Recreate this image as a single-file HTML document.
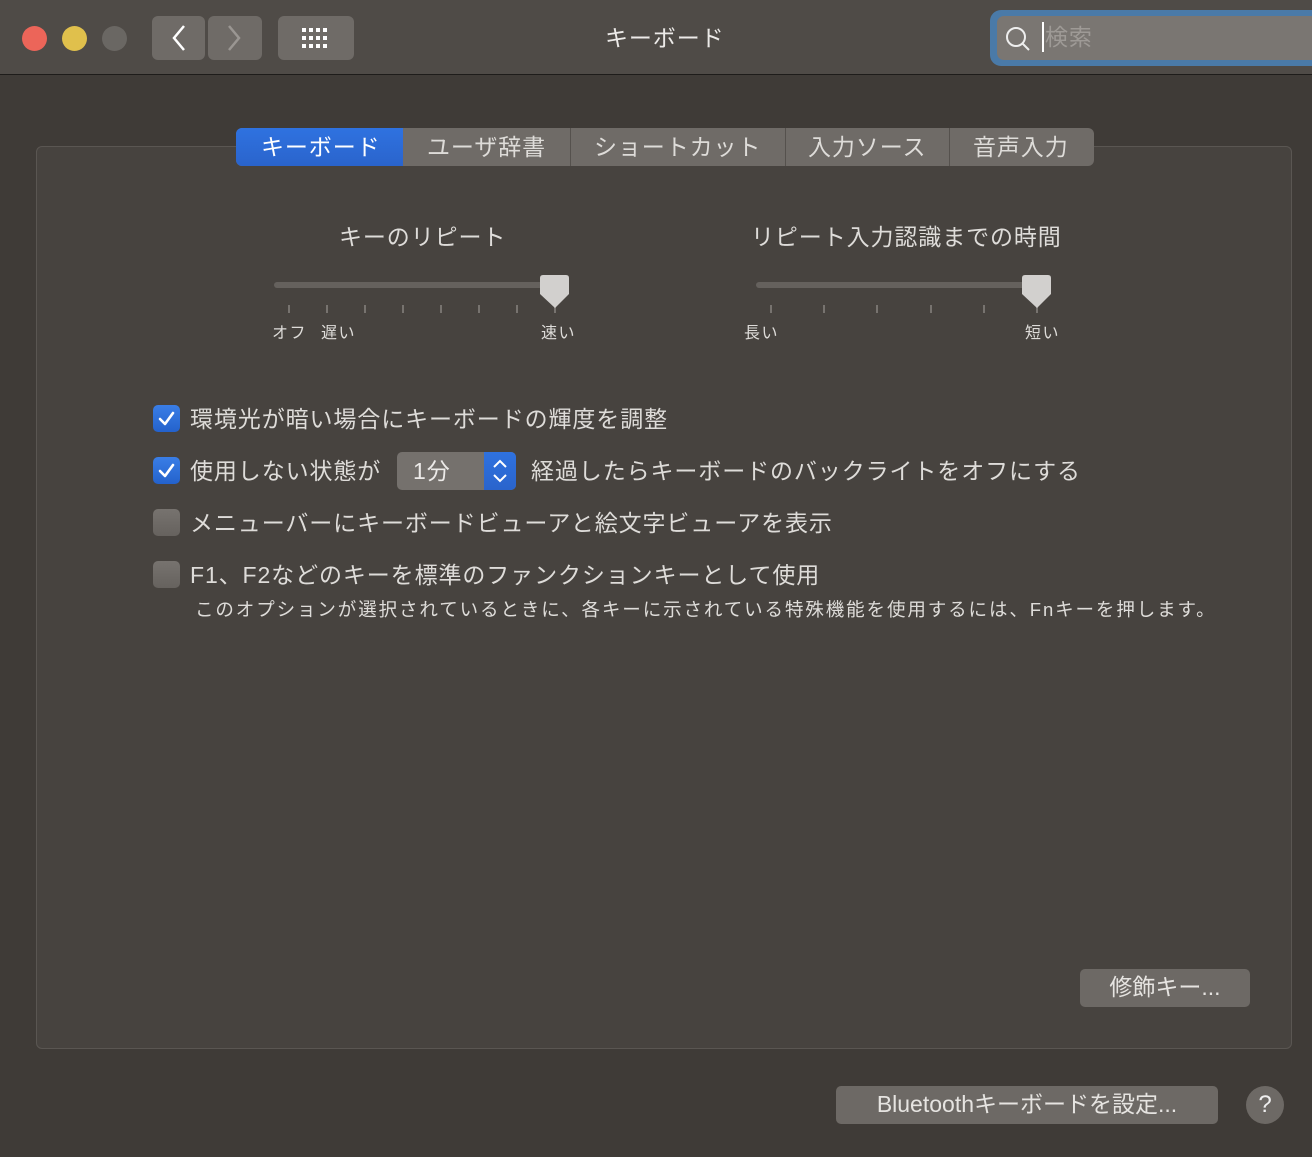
<!DOCTYPE html>
<html><head><meta charset="utf-8"><style>
*{margin:0;padding:0;box-sizing:border-box}
body{width:1312px;height:1157px;background:#3f3b37;font-family:"Liberation Sans","Noto Sans CJK JP",sans-serif;color:#dedcd9;position:relative;overflow:hidden}
.a{position:absolute;white-space:nowrap}
.t{font-size:23px;letter-spacing:0.9px;line-height:27px}
.s{font-size:16px;letter-spacing:1.5px;line-height:20px}
.cb{position:absolute;left:153px;width:27px;height:27px;border-radius:5px}
.on{background:linear-gradient(#3a7ee6,#2462cc)}
.off{background:linear-gradient(#77736f,#66625e)}
.tick{position:absolute;width:2px;height:8px;background:#77736f;top:305px}
.btn{position:absolute;background:#6d6965;border-radius:5px;font-size:23px;letter-spacing:0;text-align:center;line-height:37px;color:#e6e4e1}
</style></head><body>
<div class="a" style="left:0;top:0;width:1312px;height:75px;background:#4f4b47;border-bottom:1px solid #1e1c1a"></div>
<div class="a" style="left:22px;top:26px;width:25px;height:25px;border-radius:50%;background:#ec6559"></div>
<div class="a" style="left:62px;top:26px;width:25px;height:25px;border-radius:50%;background:#e0c04c"></div>
<div class="a" style="left:102px;top:26px;width:25px;height:25px;border-radius:50%;background:#6a6763"></div>
<div class="a" style="left:152px;top:16px;width:53px;height:44px;border-radius:6px;background:#6f6b67"></div>
<div class="a" style="left:208px;top:16px;width:54px;height:44px;border-radius:6px;background:#6f6b67"></div>
<svg class="a" style="left:152px;top:16px" width="110" height="44"><path d="M32 10 L22 22 L32 34" stroke="#fff" stroke-width="2.5" fill="none"/><path d="M77 10 L87 22 L77 34" stroke="#9a9692" stroke-width="2.5" fill="none"/></svg>
<div class="a" style="left:278px;top:16px;width:76px;height:44px;border-radius:6px;background:#6f6b67"></div>
<svg class="a" style="left:278px;top:16px" width="76" height="44"><g fill="#fff"><rect x="24" y="12" width="4" height="4"/><rect x="31" y="12" width="4" height="4"/><rect x="38" y="12" width="4" height="4"/><rect x="45" y="12" width="4" height="4"/><rect x="24" y="20" width="4" height="4"/><rect x="31" y="20" width="4" height="4"/><rect x="38" y="20" width="4" height="4"/><rect x="45" y="20" width="4" height="4"/><rect x="24" y="28" width="4" height="4"/><rect x="31" y="28" width="4" height="4"/><rect x="38" y="28" width="4" height="4"/><rect x="45" y="28" width="4" height="4"/></g></svg>
<div class="a t" style="left:605px;top:25px;color:#eceae8">キーボード</div>
<div class="a" style="left:990px;top:10px;width:340px;height:56px;border-radius:11px;background:#4a7aa8"></div>
<div class="a" style="left:997px;top:16px;width:330px;height:44px;border-radius:7px;background:#7a7672"></div>
<svg class="a" style="left:1003px;top:24px" width="30" height="30"><circle cx="13" cy="13" r="9" stroke="#eee" stroke-width="2" fill="none"/><path d="M19.5 19.5 L26 26" stroke="#eee" stroke-width="2"/></svg>
<div class="a" style="left:1042px;top:22px;width:2px;height:30px;background:#fff"></div>
<div class="a t" style="left:1045px;top:24px;color:#9e9a96">検索</div>
<div class="a" style="left:36px;top:146px;width:1256px;height:903px;border:1px solid #5a5652;border-radius:6px;background:#47433f"></div>
<div class="a" style="left:236px;top:128px;width:858px;height:38px;border-radius:6px;background:#6f6b67;overflow:hidden">
<div class="a" style="left:0;top:0;width:167px;height:38px;background:linear-gradient(#2f72e0,#2a64cc)"></div>
<div class="a" style="left:334px;top:0;width:1px;height:38px;background:#55514d"></div>
<div class="a" style="left:549px;top:0;width:1px;height:38px;background:#55514d"></div>
<div class="a" style="left:713px;top:0;width:1px;height:38px;background:#55514d"></div>
</div>
<div class="a t" style="left:261px;top:134px;color:#fff">キーボード</div>
<div class="a t" style="left:427px;top:134px">ユーザ辞書</div>
<div class="a t" style="left:594px;top:134px">ショートカット</div>
<div class="a t" style="left:808px;top:134px">入力ソース</div>
<div class="a t" style="left:973px;top:134px">音声入力</div>
<div class="a t" style="left:339px;top:224px">キーのリピート</div>
<div class="a" style="left:274px;top:282px;width:290px;height:6px;border-radius:3px;background:#65615d"></div>
<div class="tick" style="left:288px"></div><div class="tick" style="left:326px"></div><div class="tick" style="left:364px"></div><div class="tick" style="left:402px"></div><div class="tick" style="left:440px"></div><div class="tick" style="left:478px"></div><div class="tick" style="left:516px"></div><div class="tick" style="left:554px"></div>
<svg class="a" style="left:539px;top:274px" width="32" height="36"><path d="M4 1 H27 Q30 1 30 4 V20 L16 34 L1 20 V4 Q1 1 4 1Z" fill="#d2d0ce"/></svg>
<div class="a s" style="left:272px;top:324px">オフ</div>
<div class="a s" style="left:321px;top:324px">遅い</div>
<div class="a s" style="left:541px;top:324px">速い</div>
<div class="a t" style="left:751px;top:224px">リピート入力認識までの時間</div>
<div class="a" style="left:756px;top:282px;width:290px;height:6px;border-radius:3px;background:#65615d"></div>
<div class="tick" style="left:770px"></div><div class="tick" style="left:823px"></div><div class="tick" style="left:876px"></div><div class="tick" style="left:930px"></div><div class="tick" style="left:983px"></div><div class="tick" style="left:1036px"></div>
<svg class="a" style="left:1021px;top:274px" width="32" height="36"><path d="M4 1 H27 Q30 1 30 4 V20 L16 34 L1 20 V4 Q1 1 4 1Z" fill="#d2d0ce"/></svg>
<div class="a s" style="left:744px;top:324px">長い</div>
<div class="a s" style="left:1025px;top:324px">短い</div>
<div class="cb on" style="top:405px"></div>
<div class="cb on" style="top:457px"></div>
<svg class="a" style="left:153px;top:405px" width="27" height="80"><path d="M7 14 L12 19 L20 8" stroke="#fff" stroke-width="2.6" fill="none" stroke-linecap="round" stroke-linejoin="round"/><path d="M7 66 L12 71 L20 60" stroke="#fff" stroke-width="2.6" fill="none" stroke-linecap="round" stroke-linejoin="round"/></svg>
<div class="cb off" style="top:509px"></div>
<div class="cb off" style="top:561px"></div>
<div class="a t" style="left:190px;top:406px">環境光が暗い場合にキーボードの輝度を調整</div>
<div class="a t" style="left:190px;top:458px">使用しない状態が</div>
<div class="a" style="left:397px;top:452px;width:119px;height:38px;border-radius:5px;background:#75716d;overflow:hidden"><div class="a" style="left:87px;top:0;width:32px;height:38px;background:linear-gradient(#2f72e0,#2a64cc)"></div></div>
<svg class="a" style="left:484px;top:452px" width="32" height="38"><path d="M10 15 L16 9 L22 15 M10 23 L16 29 L22 23" stroke="#fff" stroke-width="2" fill="none"/></svg>
<div class="a t" style="left:413px;top:458px;color:#eceae8">1分</div>
<div class="a t" style="left:531px;top:458px">経過したらキーボードのバックライトをオフにする</div>
<div class="a t" style="left:190px;top:510px">メニューバーにキーボードビューアと絵文字ビューアを表示</div>
<div class="a t" style="left:190px;top:562px">F1、F2などのキーを標準のファンクションキーとして使用</div>
<div class="a" style="left:195px;top:599px;font-size:18.5px;letter-spacing:1.9px;line-height:22px">このオプションが選択されているときに、各キーに示されている特殊機能を使用するには、Fnキーを押します。</div>
<div class="btn" style="left:1080px;top:969px;width:170px;height:38px">修飾キー...</div>
<div class="btn" style="left:836px;top:1086px;width:382px;height:38px">Bluetoothキーボードを設定...</div>
<div class="a" style="left:1246px;top:1086px;width:38px;height:38px;border-radius:50%;background:#6d6965;text-align:center;line-height:38px;font-size:24px;color:#eee">?</div>
</body></html>
